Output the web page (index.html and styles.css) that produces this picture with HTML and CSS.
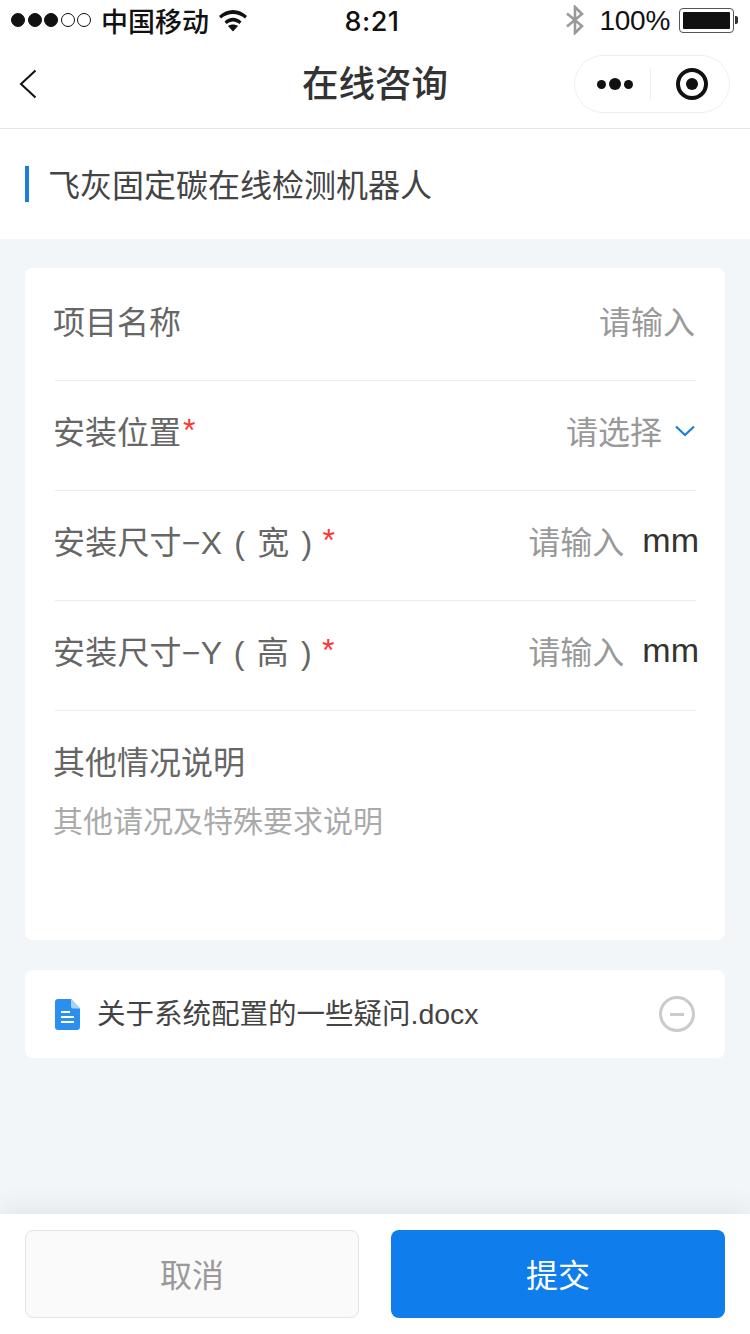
FILE: index.html
```html
<!DOCTYPE html>
<html lang="zh-CN">
<head>
    <meta charset="UTF-8">
    <meta name="viewport" content="width=device-width, initial-scale=1.0">
    <title>在线咨询</title>
    <link rel="stylesheet" href="styles.css">
</head>
<body>
    <div class="page">
        <div class="status-bar">
            <div class="status-left">
                <span class="signal">
                    <i class="dot on"></i><i class="dot on"></i><i class="dot on"></i><i class="dot"></i><i class="dot"></i>
                </span>
                <span class="carrier">中国移动</span>
                <svg class="wifi" width="28" height="22" viewBox="0 0 28 22">
                    <path d="M0 6C8 -2 20 -2 28 6L26 8.500C19 2.500 9 2.500 2 8.500Z" fill="#111"/>
                    <path d="M5.500 11.500C11 6.500 17 6.500 22.500 11.500L20.500 14C16.500 10.500 11.500 10.500 7.500 14Z" fill="#111"/>
                    <path d="M9 16C12 14 16 14 19 16L14 21.500Z" fill="#111"/>
                </svg>
            </div>
            <div class="status-time">8:21</div>
            <div class="status-right">
                <svg class="bluetooth" width="20" height="30" viewBox="0 0 20 30">
                    <path d="M2 8.500L17 21L10 28V2L17 9L2 21.500" fill="none" stroke="#999" stroke-width="2.600"/>
                </svg>
                <span class="battery-text">100%</span>
                <span class="battery"><span class="battery-fill"></span></span>
                <span class="battery-tip"></span>
            </div>
        </div>

        <div class="nav-bar">
            <svg class="back" width="20" height="32" viewBox="0 0 20 32">
                <path d="M17.500 2.500L3 16L17.500 29.500" fill="none" stroke="#111" stroke-width="2"/>
            </svg>
            <h1 class="nav-title">在线咨询</h1>
            <div class="capsule">
                <span class="more"><i></i><i class="big"></i><i></i></span>
                <span class="capsule-line"></span>
                <span class="target"><i></i></span>
            </div>
        </div>

        <div class="product">
            <span class="product-name">飞灰固定碳在线检测机器人</span>
        </div>

        <div class="content">
            <div class="card form-card">
                <div class="row first">
                    <span class="label">项目名称</span>
                    <span class="value"><span class="placeholder">请输入</span></span>
                </div>
                <div class="row">
                    <span class="label">安装位置<em>*</em></span>
                    <span class="value">
                        <span class="placeholder">请选择</span>
                        <svg class="arrow" width="22" height="14" viewBox="0 0 22 14">
                            <path d="M2 2.500L11 11L20 2.500" fill="none" stroke="#1a7fd8" stroke-width="2.200"/>
                        </svg>
                    </span>
                </div>
                <div class="row">
                    <span class="label size-label">安装尺寸−X ( 宽 ) <em>*</em></span>
                    <span class="value"><span class="placeholder">请输入</span><span class="unit">mm</span></span>
                </div>
                <div class="row">
                    <span class="label size-label">安装尺寸−Y ( 高 ) <em>*</em></span>
                    <span class="value"><span class="placeholder">请输入</span><span class="unit">mm</span></span>
                </div>
                <div class="note">
                    <div class="label">其他情况说明</div>
                    <div class="note-hint">其他请况及特殊要求说明</div>
                </div>
            </div>

            <div class="card file-card">
                <svg class="file-icon" width="25" height="31" viewBox="0 0 25 31">
                    <path d="M3 0H16L25 9.500V28C25 29.700 23.700 31 22 31H3C1.300 31 0 29.700 0 28V3C0 1.300 1.300 0 3 0Z" fill="#2b8ff0"/>
                    <path d="M16 0L25 9.500H18C16.900 9.500 16 8.600 16 7.500Z" fill="#a9d2fa"/>
                    <path d="M6 13H15M6 18H19M6 23H19" stroke="#fff" stroke-width="1.800"/>
                </svg>
                <span class="file-name">关于系统配置的一些疑问.docx</span>
                <span class="remove"><i></i></span>
            </div>
        </div>

        <div class="footer">
            <button class="btn btn-cancel">取消</button>
            <button class="btn btn-submit">提交</button>
        </div>
    </div>
</body>
</html>
```

FILE: styles.css
```css
* {
    box-sizing: border-box;
}
body {
    margin: 0;
    font-family: "Liberation Sans", "Noto Sans CJK SC", sans-serif;
    background-color: #f2f6f9;
}
i, em {
    font-style: normal;
}
.page {
    display: flex;
    flex-direction: column;
    width: 750px;
    height: 1334px;
    overflow: hidden;
}

.status-bar {
    display: grid;
    grid-template-columns: 1fr auto 1fr;
    align-items: center;
    height: 40px;
    padding: 0 12px 0 11px;
    background-color: #fff;
    color: #111;
}
.status-left, .status-right {
    display: flex;
    align-items: center;
}
.status-right {
    justify-content: flex-end;
}
.signal {
    display: flex;
    gap: 2.500px;
}
.dot {
    width: 14px;
    height: 14px;
    border: 1px solid #111;
    border-radius: 50%;
}
.dot.on {
    background-color: #111;
}
.carrier {
    margin-left: 10px;
    font-size: 27px;
    font-weight: 500;
}
.wifi {
    margin-left: 10px;
    margin-top: 1px;
}
.status-time {
    margin-right: 5px;
    padding-top: 2px;
    font-family: Inter, "Liberation Sans", sans-serif;
    font-size: 27px;
    font-weight: 500;
    letter-spacing: 0.500px;
}
.bluetooth {
    margin-right: 15px;
}
.battery-text {
    padding-top: 2px;
    font-size: 28px;
    letter-spacing: -0.300px;
    margin-right: 9px;
}
.battery {
    display: block;
    width: 55px;
    height: 25px;
    padding: 3px;
    border: 1px solid #555;
    border-radius: 4px;
}
.battery-fill {
    display: block;
    height: 100%;
    background-color: #111;
    border-radius: 1px;
}
.battery-tip {
    width: 3px;
    height: 8px;
    margin-left: 1px;
    background-color: #333;
    border-radius: 0 2px 2px 0;
}

.nav-bar {
    position: relative;
    display: flex;
    align-items: center;
    justify-content: space-between;
    height: 89px;
    padding: 0 20px 0 18px;
    background-color: #fff;
    border-bottom: 1px solid #e6e6e6;
}
.nav-title {
    position: absolute;
    top: 22px;
    left: 0;
    right: 0;
    margin: 0;
    text-align: center;
    font-size: 36.500px;
    line-height: 46px;
    font-weight: 500;
    color: #333;
}
.capsule {
    display: flex;
    align-items: center;
    width: 156px;
    height: 58px;
    border: 1px solid #efefef;
    border-radius: 29px;
}
.more {
    display: flex;
    align-items: center;
    gap: 3px;
    width: 75px;
    padding-left: 22px;
}
.more i {
    width: 9px;
    height: 9px;
    background-color: #111;
    border-radius: 50%;
}
.more i.big {
    width: 12px;
    height: 12px;
}
.capsule-line {
    width: 1px;
    height: 32px;
    background-color: #eee;
}
.target {
    display: flex;
    align-items: center;
    justify-content: center;
    width: 32px;
    height: 32px;
    margin-left: 25px;
    border: 4px solid #111;
    border-radius: 50%;
}
.target i {
    width: 12px;
    height: 12px;
    background-color: #111;
    border-radius: 50%;
}

.product {
    display: flex;
    align-items: center;
    height: 110px;
    padding-left: 25px;
    background-color: #fff;
}
.product-name {
    height: 36px;
    padding-left: 19px;
    border-left: 4px solid #1a7fd8;
    font-size: 32px;
    line-height: 40px;
    color: #444;
}

.content {
    flex: 1;
    display: flex;
    flex-direction: column;
    gap: 30px;
    padding: 29px 25px 0;
}
.card {
    background-color: #fff;
    border-radius: 8px;
}
.form-card {
    height: 672px;
    padding: 0 30px;
}
.row {
    display: flex;
    align-items: center;
    justify-content: space-between;
    height: 110px;
    padding-bottom: 12px;
    border-bottom: 1px solid #ebebeb;
    margin-right: -1px;
}
.row.first {
    height: 113px;
    padding-bottom: 9px;
}
.label {
    margin-left: -2px;
    font-size: 32px;
    word-spacing: 3px;
    color: #666;
}
.label em {
    margin-left: 2px;
    vertical-align: 3px;
    line-height: 0;
    color: #f33;
}
.size-label {
    letter-spacing: 0.200px;
}
.size-label em {
    margin-left: -2px;
}
.value {
    display: flex;
    align-items: center;
    margin-right: 1px;
}
.placeholder {
    font-size: 32px;
    color: #999;
}
.unit {
    margin-left: 18px;
    margin-right: -4px;
    padding-top: 2px;
    font-size: 34px;
    color: #333;
}
.arrow {
    margin-left: 12px;
    margin-right: -1px;
    margin-top: 2px;
}
.note {
    padding-top: 26px;
}
.note-hint {
    margin-top: 14px;
    margin-left: -2px;
    font-size: 30px;
    color: #aaa;
}

.file-card {
    display: flex;
    align-items: center;
    height: 88px;
    padding: 0 30px;
}
.file-name {
    margin-left: 17px;
    padding-bottom: 6px;
    font-size: 28.500px;
    color: #444;
}
.remove {
    display: flex;
    align-items: center;
    justify-content: center;
    width: 36px;
    height: 36px;
    margin-left: auto;
    border: 3px solid #c8ccce;
    border-radius: 50%;
}
.remove i {
    width: 14px;
    height: 3px;
    background-color: #c8ccce;
}

.footer {
    position: relative;
    display: flex;
    gap: 32px;
    height: 120px;
    padding: 16px 25px;
    background-color: #fff;
    box-shadow: 0 -6px 26px rgba(0, 0, 0, 0.07);
}
.btn {
    width: 334px;
    height: 88px;
    padding: 0 0 2px;
    border-radius: 8px;
    font-family: inherit;
    font-size: 32px;
}
.btn-cancel {
    background-color: #fafafa;
    border: 1px solid #e4e4e4;
    color: #999;
}
.btn-submit {
    background-color: #0f7deb;
    border: none;
    color: #fff;
}
```
